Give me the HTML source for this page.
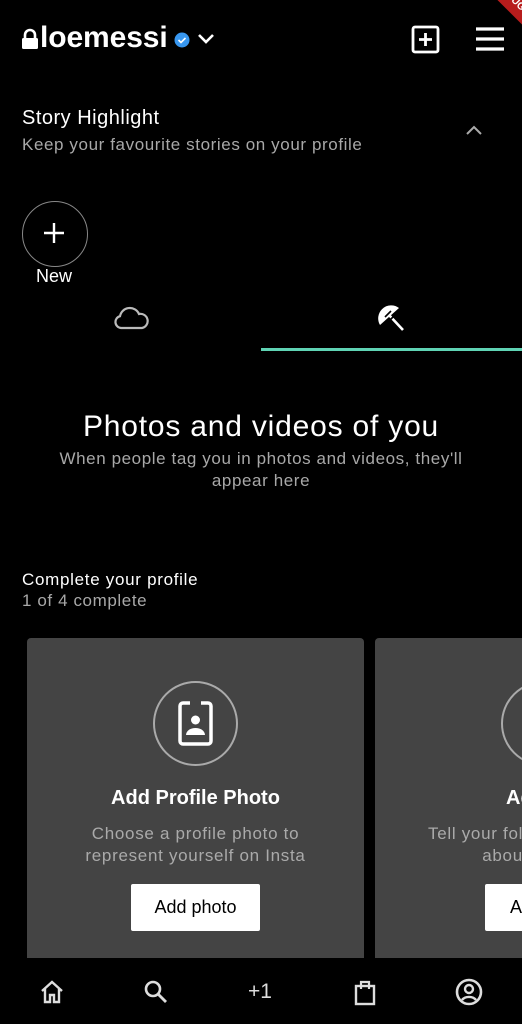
<!DOCTYPE html>
<html><head><meta charset="utf-8"><style>
*{margin:0;padding:0;box-sizing:border-box}
body{width:522px;height:1024px;background:#000;color:#fff;font-family:"Liberation Sans",sans-serif;position:relative;overflow:hidden}
.a{position:absolute;white-space:nowrap}
.g{color:#a8a8a8}
</style></head><body>
<!-- header -->
<svg class="a" style="left:21px;top:28px" width="18" height="22" viewBox="0 0 18 22"><path d="M4 10V7a5 5 0 0 1 10 0v3" stroke="#fff" stroke-width="2.6" fill="none"/><rect x="1" y="10" width="16" height="11" rx="1.5" fill="#fff"/></svg>
<div class="a" style="left:40px;top:21px;font-size:30px;font-weight:bold;letter-spacing:-0.1px">loemessi</div>
<svg class="a" style="left:174px;top:32px" width="16" height="16" viewBox="0 0 16 16"><circle cx="8" cy="8" r="7.5" fill="#3897f0"/><path d="M4.5 8l2.5 2.5 4.5-4.5" stroke="#fff" stroke-width="1.6" fill="none"/></svg>
<svg class="a" style="left:197px;top:33px" width="18" height="12" viewBox="0 0 18 12"><path d="M2 2l7 7 7-7" stroke="#fff" stroke-width="2.6" fill="none"/></svg>
<svg class="a" style="left:411px;top:25px" width="30" height="29" viewBox="0 0 30 29"><rect x="2" y="2" width="25" height="25" rx="2" stroke="#fff" stroke-width="2.8" fill="none"/><path d="M14.5 8v13M8 14.5h13" stroke="#fff" stroke-width="2.8"/></svg>
<svg class="a" style="left:475px;top:26px" width="30" height="26" viewBox="0 0 30 26"><path d="M1 3h28M1 13h28M1 23h28" stroke="#fff" stroke-width="3.2"/></svg>
<div class="a" style="left:470px;top:-14px;width:80px;height:22px;background:#b71c1c;transform:rotate(45deg);font-size:10px;font-weight:bold;text-align:center;line-height:22px;color:#fff">DEBUG</div>
<!-- story highlight -->
<div class="a" style="left:22px;top:107px;font-size:20px;letter-spacing:0.5px">Story Highlight</div>
<div class="a g" style="left:22px;top:135px;font-size:17px;letter-spacing:0.6px">Keep your favourite stories on your profile</div>
<svg class="a" style="left:465px;top:125px" width="18" height="11" viewBox="0 0 18 11"><path d="M2 9l7-7 7 7" stroke="#aaa" stroke-width="2" fill="none"/></svg>
<div class="a" style="left:22px;top:201px;width:66px;height:66px;border:1.5px solid #888;border-radius:50%"></div>
<svg class="a" style="left:43px;top:222px" width="22" height="22" viewBox="0 0 22 22"><path d="M11 1v20M1 11h20" stroke="#fff" stroke-width="2.4"/></svg>
<div class="a" style="left:36px;top:266px;font-size:18px">New</div>
<!-- tabs -->
<svg class="a" style="left:113px;top:306px" width="36" height="24" viewBox="0 0 36 24"><path d="M8 22a6 6 0 0 1-1-11.8A10 10 0 0 1 26 8a7 7 0 0 1 3 14z" stroke="#bbb" stroke-width="2.2" fill="none"/></svg>
<svg class="a" style="left:377px;top:305px" width="30" height="28" viewBox="0 0 30 28"><path d="M3 20A13 13 0 0 1 22 3z" fill="#fff"/><path d="M12 10l14 15" stroke="#fff" stroke-width="2.6"/><path d="M8 12l6-6M12 16l7-7" stroke="#000" stroke-width="1.6"/></svg>
<div class="a" style="left:261px;top:348px;width:261px;height:3px;background:#5fd3b4"></div>
<!-- empty state -->
<div class="a" style="left:0;width:522px;text-align:center;top:410px;font-size:30px;letter-spacing:0.8px">Photos and videos of you</div>
<div class="a g" style="left:0;width:522px;text-align:center;top:448px;font-size:17px;line-height:22px;white-space:normal;letter-spacing:0.6px">When people tag you in photos and videos, they'll<br>appear here</div>
<div class="a" style="left:22px;top:570px;font-size:17px;letter-spacing:0.7px">Complete your profile</div>
<div class="a g" style="left:22px;top:591px;font-size:17px;letter-spacing:0.6px">1 of 4 complete</div>
<!-- cards -->
<div class="a" style="left:27px;top:638px;width:337px;height:320px;background:#444;border-radius:4px 4px 0 0"></div>
<div class="a" style="left:153px;top:681px;width:85px;height:85px;border:2px solid #aaa;border-radius:50%"></div>
<svg class="a" style="left:178px;top:701px" width="35" height="45" viewBox="0 0 35 45"><rect x="2" y="2" width="31" height="41" rx="3" stroke="#fff" stroke-width="3.5" fill="none"/><rect x="12" y="0" width="11" height="5" fill="#444"/><circle cx="17.5" cy="19" r="4.5" fill="#fff"/><path d="M8 34a9.5 7 0 0 1 19 0z" fill="#fff"/></svg>
<div class="a" style="left:27px;width:337px;text-align:center;top:787px;font-size:20px;font-weight:bold">Add Profile Photo</div>
<div class="a" style="left:27px;width:337px;text-align:center;top:823px;font-size:17px;line-height:22px;color:#aaa;white-space:normal;letter-spacing:0.7px">Choose a profile photo to<br>represent yourself on Insta</div>
<div class="a" style="left:131px;top:884px;width:129px;height:47px;background:#fff;border-radius:2px;color:#000;font-size:18px;text-align:center;line-height:47px">Add photo</div>
<div class="a" style="left:375px;top:638px;width:200px;height:320px;background:#444;border-radius:4px 0 0 0"></div>
<div class="a" style="left:501px;top:681px;width:85px;height:85px;border:2px solid #aaa;border-radius:50%"></div>
<div class="a" style="left:506px;top:787px;font-size:20px;font-weight:bold">Ad</div>
<div class="a" style="left:428px;top:823px;font-size:17px;line-height:22px;color:#aaa;letter-spacing:0.7px">Tell your fol<br>&nbsp;&nbsp;&nbsp;&nbsp;&nbsp;&nbsp;&nbsp;&nbsp;&nbsp;&nbsp;abou</div>
<div class="a" style="left:485px;top:884px;width:60px;height:47px;background:#fff;border-radius:2px;color:#000;font-size:18px;line-height:47px;padding-left:25px">A</div>
<!-- bottom nav -->
<svg class="a" style="left:39px;top:979px" width="26" height="26" viewBox="0 0 26 26"><path d="M3 12L13 3l10 9M6 10v13h5v-7h4v7h5V10" stroke="#ddd" stroke-width="2.4" fill="none"/></svg>
<svg class="a" style="left:143px;top:979px" width="26" height="26" viewBox="0 0 26 26"><circle cx="10" cy="10" r="7" stroke="#ddd" stroke-width="2.6" fill="none"/><path d="M15 15l8 8" stroke="#ddd" stroke-width="2.8"/></svg>
<div class="a" style="left:248px;top:980px;font-size:21px;color:#ddd">+1</div>
<svg class="a" style="left:353px;top:978px" width="24" height="28" viewBox="0 0 24 28"><rect x="3" y="8" width="18" height="18" stroke="#ddd" stroke-width="2.4" fill="none"/><path d="M8 11V4h8v7" stroke="#ddd" stroke-width="2.2" fill="none"/></svg>
<svg class="a" style="left:455px;top:978px" width="28" height="28" viewBox="0 0 28 28"><circle cx="14" cy="14" r="12" stroke="#ddd" stroke-width="2.6" fill="none"/><circle cx="14" cy="11" r="4" stroke="#ddd" stroke-width="2.4" fill="none"/><path d="M7 22a8 6 0 0 1 14 0" stroke="#ddd" stroke-width="2.4" fill="none"/></svg>
</body></html>
